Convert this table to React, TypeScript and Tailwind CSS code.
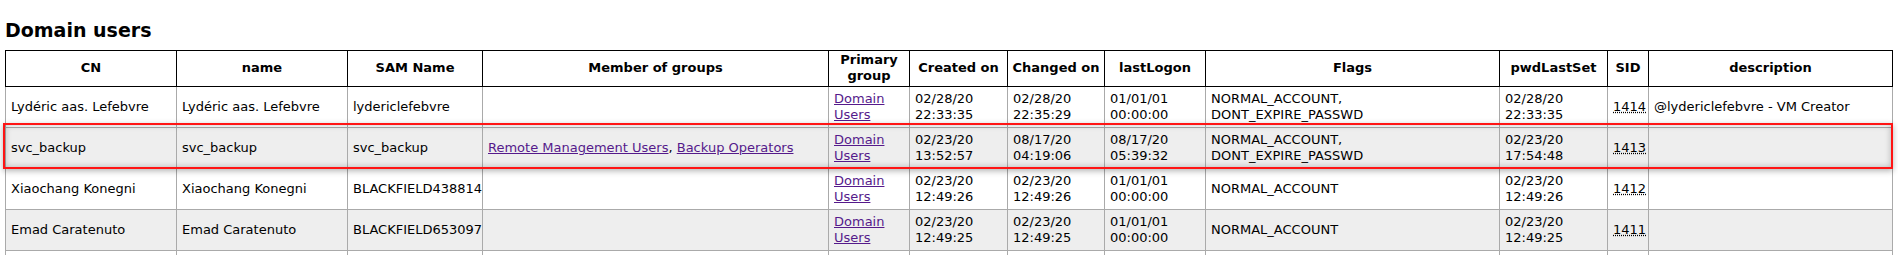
import React from 'react'

type User = {
  cn: string
  name: string
  sam: string
  groups: string[]
  created: [string, string]
  changed: [string, string]
  lastLogon: [string, string]
  flags: string[]
  pwdLastSet: [string, string]
  sid: string
  description: string
}

const users: User[] = [
  {
    cn: 'Lydéric aas. Lefebvre',
    name: 'Lydéric aas. Lefebvre',
    sam: 'lydericlefebvre',
    groups: [],
    created: ['02/28/20', '22:33:35'],
    changed: ['02/28/20', '22:35:29'],
    lastLogon: ['01/01/01', '00:00:00'],
    flags: ['NORMAL_ACCOUNT,', 'DONT_EXPIRE_PASSWD'],
    pwdLastSet: ['02/28/20', '22:33:35'],
    sid: '1414',
    description: '@lydericlefebvre - VM Creator',
  },
  {
    cn: 'svc_backup',
    name: 'svc_backup',
    sam: 'svc_backup',
    groups: ['Remote Management Users', 'Backup Operators'],
    created: ['02/23/20', '13:52:57'],
    changed: ['08/17/20', '04:19:06'],
    lastLogon: ['08/17/20', '05:39:32'],
    flags: ['NORMAL_ACCOUNT,', 'DONT_EXPIRE_PASSWD'],
    pwdLastSet: ['02/23/20', '17:54:48'],
    sid: '1413',
    description: '',
  },
  {
    cn: 'Xiaochang Konegni',
    name: 'Xiaochang Konegni',
    sam: 'BLACKFIELD438814',
    groups: [],
    created: ['02/23/20', '12:49:26'],
    changed: ['02/23/20', '12:49:26'],
    lastLogon: ['01/01/01', '00:00:00'],
    flags: ['NORMAL_ACCOUNT'],
    pwdLastSet: ['02/23/20', '12:49:26'],
    sid: '1412',
    description: '',
  },
  {
    cn: 'Emad Caratenuto',
    name: 'Emad Caratenuto',
    sam: 'BLACKFIELD653097',
    groups: [],
    created: ['02/23/20', '12:49:25'],
    changed: ['02/23/20', '12:49:25'],
    lastLogon: ['01/01/01', '00:00:00'],
    flags: ['NORMAL_ACCOUNT'],
    pwdLastSet: ['02/23/20', '12:49:25'],
    sid: '1411',
    description: '',
  },
]

const headers = [
  { label: 'CN', w: 'w-[171px]' },
  { label: 'name', w: 'w-[171px]' },
  { label: 'SAM Name', w: 'w-[135px]' },
  { label: 'Member of groups', w: 'w-[346px]' },
  { label: 'Primary group', w: 'w-[81px]' },
  { label: 'Created on', w: 'w-[98px]' },
  { label: 'Changed on', w: 'w-[97px]' },
  { label: 'lastLogon', w: 'w-[101px]' },
  { label: 'Flags', w: 'w-[294px]' },
  { label: 'pwdLastSet', w: 'w-[108px]' },
  { label: 'SID', w: 'w-[41px]' },
  { label: 'description', w: 'w-[244px]' },
]

const td = 'border border-[#aaaaaa] pl-[5px] pr-[3px] pt-[4px] pb-[4px] align-middle text-left'
const link = 'text-[#551a8b] underline'

function TwoLines({ v }: { v: string[] }) {
  return (
    <>
      {v.map((s, i) => (
        <div key={i}>{s}</div>
      ))}
    </>
  )
}

export default function App() {
  return (
    <div className="bg-white text-black font-['Verdana','DejaVu_Sans',sans-serif] text-[13px] leading-[16px] pl-[5px] pt-[19px]">
      <h2 className="text-[19px] leading-[22px] font-bold mb-[9px]">Domain users</h2>

      <div className="relative w-[1888px]">
        <table className="table-fixed border-collapse w-[1888px]">
          <colgroup>
            {headers.map((h) => (
              <col key={h.label} className={h.w} />
            ))}
          </colgroup>
          <thead>
            <tr>
              {headers.map((h) => (
                <th
                  key={h.label}
                  className="border border-black font-bold text-center pt-[1px] pb-[2px] px-[2px] align-middle"
                >
                  {h.label === 'Primary group' ? (
                    <>
                      Primary
                      <br />
                      group
                    </>
                  ) : (
                    h.label
                  )}
                </th>
              ))}
            </tr>
          </thead>
          <tbody>
            {users.map((u, i) => (
              <tr key={u.sid} className={i % 2 === 1 ? 'bg-[#eeeeee]' : 'bg-white'}>
                <td className={td}>{u.cn}</td>
                <td className={td}>{u.name}</td>
                <td className={td}>{u.sam}</td>
                <td className={td}>
                  {u.groups.map((g, j) => (
                    <span key={g}>
                      <a className={link}>{g}</a>
                      {j < u.groups.length - 1 ? ', ' : ''}
                    </span>
                  ))}
                </td>
                <td className={td}>
                  <a className={link}>
                    Domain
                    <br />
                    Users
                  </a>
                </td>
                <td className={td}>
                  <TwoLines v={u.created} />
                </td>
                <td className={td}>
                  <TwoLines v={u.changed} />
                </td>
                <td className={td}>
                  <TwoLines v={u.lastLogon} />
                </td>
                <td className={td}>
                  <TwoLines v={u.flags} />
                </td>
                <td className={td}>
                  <TwoLines v={u.pwdLastSet} />
                </td>
                <td className={td}>
                  <abbr className="underline decoration-dotted">{u.sid}</abbr>
                </td>
                <td className={td}>{u.description}</td>
              </tr>
            ))}
            <tr className="bg-white">
              {headers.map((h) => (
                <td key={h.label} className={td + ' h-[41px]'} />
              ))}
            </tr>
          </tbody>
        </table>

        {/* highlight around svc_backup */}
        <div className="pointer-events-none absolute left-[-2px] top-[73px] w-[1890px] h-[46px] border-2 border-[#ff1414] shadow-[0_2px_6px_rgba(0,0,0,0.3),inset_0_0_6px_rgba(0,0,0,0.25)]" />
      </div>
    </div>
  )
}
